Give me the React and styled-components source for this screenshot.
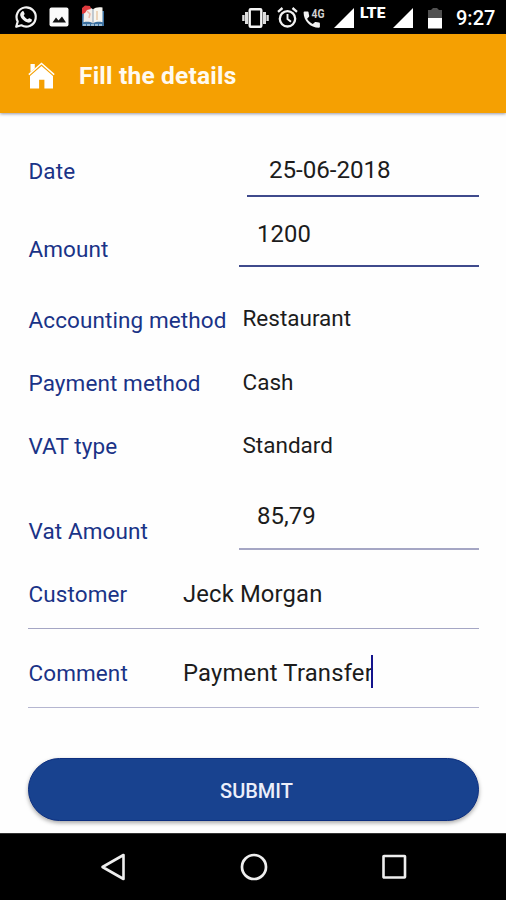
import React from "react";
import styled, { createGlobalStyle } from "styled-components";

const fields = [
  { label: "Date", value: "25-06-2018", height: 84, labelTop: 44, valueTop: 43, column: 219, indent: 22, size: 24.2, spacing: -0.05, line: "#3f4a8c" },
  { label: "Amount", value: "1200", height: 70, labelTop: 38, valueTop: 23, column: 211, indent: 18, size: 23.8, spacing: 0.1, line: "#3f4a8c" },
  { label: "Accounting method", value: "Restaurant", height: 84, labelTop: 39, valueTop: 37, column: 211, indent: 3.5 },
  { label: "Payment method", value: "Cash", height: 64, labelTop: 18, valueTop: 17, column: 211, indent: 3.5 },
  { label: "VAT type", value: "Standard", height: 63, labelTop: 17, valueTop: 16, column: 211, indent: 3.5 },
  { label: "Vat Amount", value: "85,79", height: 72, labelTop: 39, valueTop: 24, column: 211, indent: 18, size: 24, spacing: 0, line: "#a5a6c4" },
  { label: "Customer", value: "Jeck Morgan", height: 79, labelTop: 30, valueTop: 30, column: 155, size: 23.8, spacing: 0.15, fullLine: true, line: "#a5a6c4" },
  { label: "Comment", value: "Payment Transfer", height: 79, labelTop: 30, valueTop: 30, column: 155, size: 23.8, spacing: 0.2, fullLine: true, line: "#b5b6d0", caret: true },
];

const WhatsappIcon = () => (
  <Icon width="24" height="24" viewBox="0 0 24 24">
    <path
      d="M2.200 21.800l1.500-5.300A9.600 9.600 0 1 1 7.400 20.300z"
      fill="none"
      stroke="#f2f2f2"
      strokeWidth="2.200"
      strokeLinejoin="round"
    />
    <path
      d="M8.300 6.300c.5-.4 1.200-.2 1.400.3l.9 2.100c.1.400-.1.800-.9 1.700 1 1.900 2.300 3 4.200 3.900.7-.9 1.100-1.300 1.500-1.100l2.200 1.100c.5.3.3 1.600-.2 2.200-.8.9-2.300 1.400-3.700 1-3.600-1-6.500-3.700-7.400-6.700-.5-1.700.4-3.500 2-4.500z"
      fill="#f2f2f2"
    />
  </Icon>
);

const PhotoIcon = () => (
  <Icon width="20" height="20" viewBox="0 0 20 20">
    <rect x="0.500" y="0.500" width="19" height="19" rx="2" fill="#fafafa" />
    <path d="M3.500 15.500l3.500-5 2.500 3 3.500-4 4 6z" fill="#111" />
  </Icon>
);

const BookIcon = () => (
  <Icon width="24" height="24" viewBox="0 0 24 24">
    <path d="M1 6h22v15H1z" fill="#3a6f9f" />
    <path d="M3 2.500c4-.8 7 0 9 1.800v14c-3-1.600-6-1.800-9.500-1z" fill="#f2eeea" />
    <path d="M21.500 2.500c-4-.8-7.500 0-9.500 1.800v14c3-1.600 6-1.800 9.500-1z" fill="#f8f6f0" />
    <path d="M12 4v14.500" stroke="#8ba0b5" strokeWidth="1" />
    <path d="M16 6v9" stroke="#e9c8a8" strokeWidth="1.500" />
    <path d="M1 9V3l3-2.500 5 .5 1 3-4 1-2 3z" fill="#df3a3d" />
    <path d="M6 6l3 3-1 4" stroke="#edb7a5" strokeWidth="1.500" fill="none" />
    <path d="M2 20h20" stroke="#b9d3e6" strokeWidth="1.500" strokeDasharray="3 1" />
  </Icon>
);

const VibrateIcon = () => (
  <Icon width="27" height="20" viewBox="0 0 27 20">
    <rect x="7.700" y="1.200" width="11.600" height="17.600" rx="1" fill="none" stroke="#f5f5f5" strokeWidth="2.400" />
    <path d="M4.500 4v12M22.500 4v12" stroke="#dedede" strokeWidth="3" />
    <path d="M1.400 7v6M25.600 7v6" stroke="#dedede" strokeWidth="2.400" />
  </Icon>
);

const AlarmIcon = () => (
  <Icon width="21" height="21" viewBox="0 0 21 21">
    <circle cx="10.500" cy="11.800" r="7.700" fill="none" stroke="#f2f2f2" strokeWidth="2.300" />
    <path d="M1 4.800L5.500 1M20 4.800L15.500 1" stroke="#f2f2f2" strokeWidth="2.300" />
    <path d="M10.500 7v5l3.500 2.800" fill="none" stroke="#f2f2f2" strokeWidth="1.900" />
  </Icon>
);

const CallIcon = () => (
  <Icon width="23" height="24" viewBox="0 0 23 24">
    <path
      d="M1.500 6.500h3.200c.5 0 .9.300.9.900.1 1.200.3 2.300.6 3.300.1.400 0 .7-.2 1l-1.900 2c1.400 2.400 3.200 4.100 5.700 5.400l2-1.900c.3-.3.600-.3 1-.2 1.100.3 2.100.5 3.200.6.500 0 .9.400.9.900v3.300c0 .5-.4.900-.9.900C7.300 22.700.6 16 .6 7.500c0-.6.400-1 .9-1z"
      fill="#f2f2f2"
    />
    <text x="8.500" y="13" fontSize="13" fontWeight="700" textLength="13" lengthAdjust="spacingAndGlyphs" fill="#d0d0d0">
      4G
    </text>
  </Icon>
);

const SignalIcon = () => (
  <Icon width="20" height="20" viewBox="0 0 20 20">
    <path d="M20 0v20H0z" fill="#fff" />
  </Icon>
);

const BatteryIcon = () => (
  <Icon width="14" height="21" viewBox="0 0 14 21">
    <path d="M5 0h4l2 2h3v8H0V2h3z" fill="#515151" />
    <path d="M0 10h14v10.500H0z" fill="#fff" />
  </Icon>
);

const HomeIcon = () => (
  <Icon width="27" height="27" viewBox="0 0 27 27">
    <path d="M2.500 2h4.300v4.500l-4.300 3.500z" fill="#fff" />
    <path d="M.8 12.600L13.500 1.500l12.700 11.100" fill="none" stroke="#fff" strokeWidth="1.500" />
    <path d="M13.500 3.900L25 14v12.500h-8.600v-8.800h-5.300v8.800H2V14z" fill="#fff" />
  </Icon>
);

const BackIcon = () => (
  <Icon width="28" height="28" viewBox="0 0 28 28">
    <path d="M24.500 2v24L3.500 14z" fill="none" stroke="#eee" strokeWidth="2.600" strokeLinejoin="round" />
  </Icon>
);

const CircleIcon = () => (
  <Icon width="28" height="28" viewBox="0 0 28 28">
    <circle cx="14" cy="14" r="12" fill="none" stroke="#eee" strokeWidth="2.700" />
  </Icon>
);

const SquareIcon = () => (
  <Icon width="28" height="28" viewBox="0 0 28 28">
    <rect x="3.500" y="3" width="21.500" height="21.500" rx="0.500" fill="none" stroke="#eee" strokeWidth="2.600" />
  </Icon>
);

const App = () => (
  <Screen>
    <GlobalStyle />
    <StatusBar>
      <Slot $left={14} $top={5}><WhatsappIcon /></Slot>
      <Slot $left={11} $top={7}><PhotoIcon /></Slot>
      <Slot $left={12} $top={5}><BookIcon /></Slot>
      <Slot $left={137} $top={8}><VibrateIcon /></Slot>
      <Slot $left={8} $top={7}><AlarmIcon /></Slot>
      <Slot $left={5} $top={5}><CallIcon /></Slot>
      <Slot $left={8} $top={8}><SignalIcon /></Slot>
      <Network>LTE</Network>
      <Slot $left={6} $top={8}><SignalIcon /></Slot>
      <Slot $left={15} $top={8}><BatteryIcon /></Slot>
      <Clock>9:27</Clock>
    </StatusBar>

    <Header>
      <HomeIcon />
      <Title>Fill the details</Title>
    </Header>

    <Form>
      {fields.map((field) => (
        <Row
          key={field.label}
          $height={field.height}
          $column={field.column}
          $line={field.fullLine && field.line}
        >
          <Label $top={field.labelTop}>{field.label}</Label>
          <Value
            $top={field.valueTop}
            $indent={field.indent}
            $size={field.size}
            $spacing={field.spacing}
            $line={!field.fullLine && field.line}
          >
            {field.value}
            {field.caret && <Caret />}
          </Value>
        </Row>
      ))}
      <Submit type="button">SUBMIT</Submit>
    </Form>

    <NavBar>
      <BackIcon />
      <CircleIcon />
      <SquareIcon />
    </NavBar>
  </Screen>
);

const GlobalStyle = createGlobalStyle`
  body {
    margin: 0;
    background: #fefefe;
  }
  * {
    box-sizing: border-box;
  }
`;

const Screen = styled.div`
  display: flex;
  flex-direction: column;
  width: 506px;
  height: 900px;
  overflow: hidden;
  background: #fefefe;
  font-family: Roboto, "Liberation Sans", sans-serif;
`;

const Icon = styled.svg`
  display: block;
  flex: none;
  overflow: visible;
`;

const StatusBar = styled.div`
  display: flex;
  flex: none;
  align-items: flex-start;
  height: 34px;
  background: #000;
  color: #fff;
`;

const Slot = styled.div`
  flex: none;
  margin-left: ${(props) => props.$left}px;
  padding-top: ${(props) => props.$top}px;
`;

const Network = styled.span`
  width: 27px;
  margin-left: 6px;
  padding-top: 5px;
  font-size: 15.5px;
  font-weight: 900;
  line-height: 17px;
  white-space: nowrap;
`;

const Clock = styled.span`
  margin-left: 14px;
  padding-top: 6px;
  font-size: 20px;
  font-weight: 500;
  line-height: 24px;
  white-space: nowrap;
`;

const Header = styled.header`
  display: flex;
  flex: none;
  align-items: center;
  height: 79px;
  padding: 3px 0 0 28px;
  background: #f5a002;
  box-shadow: 0 1px 3px rgba(50, 50, 80, 0.5);
`;

const Title = styled.h1`
  margin: 1px 0 0 24px;
  color: #fffaf0;
  font-size: 24.5px;
  font-weight: 700;
  letter-spacing: 0.2px;
  line-height: 28px;
`;

const Form = styled.form`
  flex: 1;
  padding: 0 27px 0 28px;
`;

const Row = styled.div`
  display: grid;
  grid-template-columns: ${(props) => props.$column}px 1fr;
  height: ${(props) => props.$height}px;
  border-bottom: ${(props) => (props.$line ? `1.5px solid ${props.$line}` : "none")};
`;

const Label = styled.label`
  padding: ${(props) => props.$top}px 0 0 0.5px;
  color: #1a3387;
  font-size: 22.5px;
  letter-spacing: 0.1px;
  line-height: 28px;
  white-space: nowrap;
`;

const Value = styled.div`
  display: flex;
  padding: ${(props) => props.$top}px 0 0 ${(props) => props.$indent || 0}px;
  border-bottom: ${(props) => (props.$line ? `2px solid ${props.$line}` : "none")};
  color: #1c1c1c;
  font-size: ${(props) => props.$size || 22.5}px;
  letter-spacing: ${(props) => props.$spacing ?? 0}px;
  line-height: 28px;
  white-space: nowrap;
`;

const Caret = styled.span`
  width: 2px;
  height: 33px;
  margin: -4px 0 0 -1.5px;
  background: #14148c;
`;

const Submit = styled.button`
  display: block;
  width: 100%;
  height: 63px;
  margin-top: 50px;
  padding: 2px 0 0 6px;
  border: 1px solid #0d2f80;
  border-radius: 32px;
  background: #18428f;
  box-shadow: 0 2px 4px rgba(0, 0, 0, 0.35);
  color: #eceffa;
  font-family: inherit;
  font-size: 20px;
  font-weight: 500;
`;

const NavBar = styled.nav`
  display: flex;
  flex: none;
  align-items: center;
  justify-content: space-between;
  height: 67px;
  padding: 0 98px 0 99px;
  border-top: 1px solid #333;
  background: #000;
`;

export default App;
